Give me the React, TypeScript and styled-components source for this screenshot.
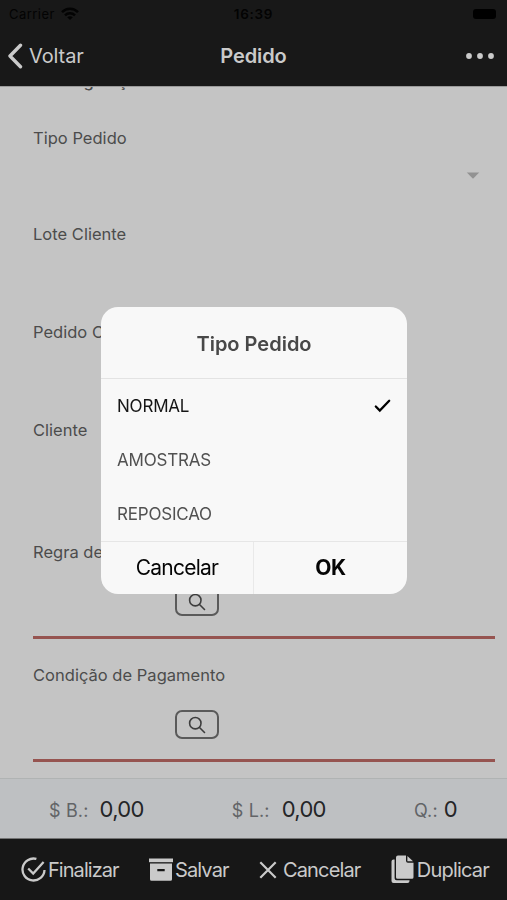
import React from "react";
import styled, { createGlobalStyle } from "styled-components";

const GlobalStyle = createGlobalStyle`
  * { box-sizing: border-box; }
  body { margin: 0; background: #c4c4c4; }
  button { font: inherit; color: inherit; background: none; border: 0; padding: 0; letter-spacing: inherit; }
  svg { display: block; flex: none; }
`;

const Screen = styled.div`
  width: 507px;
  height: 900px;
  display: flex;
  flex-direction: column;
  overflow: hidden;
  background: #c4c4c4;
  font-family: Inter, "Liberation Sans", sans-serif;
  color: #4c4c4c;
`;

const StatusBar = styled.div`
  height: 27px;
  flex: none;
  display: grid;
  grid-template-columns: 1fr auto 1fr;
  align-items: center;
  padding: 0 11px 0 9px;
  background: #181818;
  color: #030303;
  font-size: 13px;
`;

const Carrier = styled.div`
  display: flex;
  align-items: center;
  gap: 6px;
  letter-spacing: 0.45px;
`;

const Clock = styled.div`
  margin-left: 2px;
  font-weight: 600;
  font-size: 13.5px;
  letter-spacing: 0.7px;
`;

const Battery = styled.div`
  justify-self: end;
  width: 23px;
  height: 10px;
  border-radius: 3px;
  background: #000;
`;

const NavBar = styled.header`
  height: 59px;
  flex: none;
  display: grid;
  grid-template-columns: 1fr auto 1fr;
  align-items: center;
  padding: 0 13px 2px 8px;
  background: #181818;
  color: #cacaca;
`;

const BackButton = styled.button`
  display: flex;
  align-items: center;
  gap: 6px;
  font-size: 20px;
  letter-spacing: -0.1px;
`;

const NavTitle = styled.h1`
  margin: 0 0 0 5px;
  font-size: 20px;
  font-weight: 600;
  letter-spacing: -0.1px;
`;

const MoreButton = styled.button`
  justify-self: end;
`;

const Form = styled.main`
  flex: 1;
  min-height: 0;
  overflow: hidden;
  padding: 0 12px 0 33px;
  border-top: 1px solid #9b9b9b;
`;

const SectionTitle = styled.h2`
  height: 22px;
  margin: -17px 0 36px 10px;
  font-size: 16.5px;
  line-height: 22px;
  font-weight: 500;
  letter-spacing: -0.4px;
`;

const Field = styled.div<{ $height: number }>`
  height: ${(p) => p.$height}px;
`;

const Label = styled.div`
  height: 20px;
  font-size: 16.5px;
  line-height: 20px;
  letter-spacing: 0.02px;
  white-space: nowrap;
`;

const SelectRow = styled.div`
  display: flex;
  justify-content: flex-end;
  padding: 24px 15px 0 0;
`;

const LookupRow = styled.div`
  height: 77px;
  padding: 25px 0 0 142px;
  border-bottom: 3px solid #965450;
`;

const LookupButton = styled.button`
  width: 44px;
  height: 29px;
  display: flex;
  align-items: center;
  justify-content: center;
  border: 2px solid #5a5a5a;
  border-radius: 7px;
`;

const Totals = styled.section`
  height: 60px;
  flex: none;
  display: flex;
  align-items: center;
  justify-content: space-between;
  padding: 0 50px 0 49px;
  background: #bec0c2;
  border-top: 1px solid #b0b3b3;
`;

const Total = styled.div<{ $gap: number }>`
  display: flex;
  align-items: baseline;
  gap: ${(p) => p.$gap}px;
  font-size: 18px;
  letter-spacing: 0.15px;
  color: #626467;
`;

const Amount = styled.span`
  font-size: 22px;
  letter-spacing: -0.7px;
  color: #242527;
`;

const Toolbar = styled.footer`
  height: 62px;
  flex: none;
  display: flex;
  align-items: center;
  justify-content: space-between;
  padding: 0 18px 0 21px;
  background: #171717;
  border-top: 1px solid #737373;
  color: #cacaca;
`;

const ToolButton = styled.button<{ $gap: number; $tracking: number }>`
  display: flex;
  align-items: center;
  gap: ${(p) => p.$gap}px;
  font-size: 20px;
  letter-spacing: ${(p) => p.$tracking}px;
`;

const Overlay = styled.div`
  position: fixed;
  top: 307px;
  left: 101px;
  width: 306px;
`;

const Dialog = styled.div`
  height: 287px;
  display: flex;
  flex-direction: column;
  border-radius: 17px;
  background: #f8f8f8;
  overflow: hidden;
`;

const DialogTitle = styled.h2`
  height: 72px;
  margin: 0;
  display: flex;
  align-items: center;
  justify-content: center;
  padding-top: 2px;
  border-bottom: 1px solid #e3e3e3;
  font-size: 20px;
  font-weight: 600;
  color: #484848;
`;

const Options = styled.div`
  height: 162px;
  display: grid;
  grid-template-rows: repeat(3, 54px);
`;

const Option = styled.div<{ $selected?: boolean }>`
  display: flex;
  align-items: center;
  justify-content: space-between;
  padding: 0 16px;
  font-size: 17px;
  letter-spacing: -0.2px;
  color: ${(p) => (p.$selected ? "#151515" : "#515151")};
`;

const Actions = styled.div`
  height: 53px;
  display: grid;
  grid-template-columns: 152px 1fr;
  border-top: 1px solid #e6e6e6;
  color: #050505;
`;

const Action = styled.button<{ $strong?: boolean }>`
  padding-bottom: 2px;
  font-size: 21px;
  font-weight: ${(p) => (p.$strong ? 700 : 400)};
  letter-spacing: ${(p) => (p.$strong ? -0.5 : -0.75)}px;
  & + & { border-left: 1px solid #e9e9e9; }
`;

const SearchIcon = () => (
  <svg width="18" height="18" viewBox="0 0 18 18" fill="none" stroke="#3d3d3d" strokeWidth="1.6" strokeLinecap="round">
    <circle cx="7.3" cy="7.2" r="5.7" />
    <path d="M11.5 11.5 16.5 16.5" />
  </svg>
);

const Lookup = ({ label, height }: { label: string; height: number }) => (
  <Field $height={height}>
    <Label>{label}</Label>
    <LookupRow>
      <LookupButton aria-label={label}>
        <SearchIcon />
      </LookupButton>
    </LookupRow>
  </Field>
);

export default function App() {
  return (
    <Screen>
      <GlobalStyle />
      <StatusBar>
        <Carrier>
          Carrier
          <svg width="18" height="14" viewBox="0 0 18 14" fill="none" stroke="#030303" strokeWidth="2.5">
            <path d="M1 5.2C5.5.6 12.5.6 17 5.2M4 8.3c2.8-2.7 7.2-2.7 10 0" />
            <path d="M9 13 6.2 10.2c1.6-1.4 4-1.4 5.6 0Z" fill="#030303" stroke="none" />
          </svg>
        </Carrier>
        <Clock>16:39</Clock>
        <Battery />
      </StatusBar>
      <NavBar>
        <BackButton>
          <svg width="15" height="26" viewBox="0 0 15 26" fill="none" stroke="currentColor" strokeWidth="3.4" strokeLinecap="round" strokeLinejoin="round">
            <path d="M12.5 2.2 2 13 12.5 23.8" />
          </svg>
          Voltar
        </BackButton>
        <NavTitle>Pedido</NavTitle>
        <MoreButton aria-label="Mais">
          <svg width="28" height="8" viewBox="0 0 28 8" fill="currentColor">
            <circle cx="3" cy="4" r="2.9" />
            <circle cx="14" cy="4" r="2.9" />
            <circle cx="25" cy="4" r="2.9" />
          </svg>
        </MoreButton>
      </NavBar>
      <Form>
        <SectionTitle>Configurações</SectionTitle>
        <Field $height={96}>
          <Label>Tipo Pedido</Label>
          <SelectRow>
            <svg width="14" height="7" viewBox="0 0 14 7" fill="#929292">
              <path d="M.8.5h12.4L7 6.7Z" />
            </svg>
          </SelectRow>
        </Field>
        <Field $height={98}>
          <Label>Lote Cliente</Label>
        </Field>
        <Field $height={98}>
          <Label>Pedido Cliente</Label>
        </Field>
        <Field $height={122}>
          <Label>Cliente</Label>
        </Field>
        <Lookup label="Regra de Preço" height={123} />
        <Lookup label="Condição de Pagamento" height={113} />
      </Form>
      <Totals>
        <Total $gap={11}>$ B.: <Amount>0,00</Amount></Total>
        <Total $gap={12}>$ L.: <Amount>0,00</Amount></Total>
        <Total $gap={6}>Q.: <Amount>0</Amount></Total>
      </Totals>
      <Toolbar>
        <ToolButton $gap={2} $tracking={-0.95}>
          <svg width="25" height="25" viewBox="0 0 25 25" fill="none" stroke="currentColor" strokeWidth="2.3">
            <path d="M15.4 1.9A11 11 0 1 0 23.5 13" />
            <path d="m7.2 11.5 5 5L22.6 5" />
          </svg>
          Finalizar
        </ToolButton>
        <ToolButton $gap={2} $tracking={-0.85}>
          <svg width="24" height="23" viewBox="0 0 24 23" fill="currentColor">
            <path d="M0 .5h24v3.7H0Z" />
            <path fillRule="evenodd" d="M1 5.5h22v15.8a1.5 1.5 0 0 1-1.5 1.5h-19A1.5 1.5 0 0 1 1 21.3ZM8.3 11v2.3h7.4V11Z" />
          </svg>
          Salvar
        </ToolButton>
        <ToolButton $gap={6} $tracking={-0.85}>
          <svg width="18" height="18" viewBox="0 0 18 18" fill="none" stroke="currentColor" strokeWidth="2.2">
            <path d="m1.3 1.3 15.4 15.4M16.7 1.3 1.3 16.7" />
          </svg>
          Cancelar
        </ToolButton>
        <ToolButton $gap={3} $tracking={-0.8}>
          <svg width="23" height="29" viewBox="0 0 23 29" fill="currentColor">
            <path d="M2.5 4.5H3.6V23.3a2 2 0 0 0 2 2h12.9V26a2 2 0 0 1-2 2H2.5A2 2 0 0 1 .5 26V6.5a2 2 0 0 1 2-2Z" />
            <path d="M7 .5h8v5.3a2 2 0 0 0 2 2h5.5v14.5a1.5 1.5 0 0 1-1.5 1.5H6.5A1.5 1.5 0 0 1 5 22.3V2.5a2 2 0 0 1 2-2Z" />
            <path d="M16.4.9 22 6.3h-5.6Z" />
          </svg>
          Duplicar
        </ToolButton>
      </Toolbar>
      <Overlay>
        <Dialog role="dialog">
          <DialogTitle>Tipo Pedido</DialogTitle>
          <Options>
            <Option $selected>
              NORMAL
              <svg width="17" height="14" viewBox="0 0 17 14" fill="none" stroke="#000" strokeWidth="2.3" strokeLinecap="round">
                <path d="m1.8 7.5 4 4L15.2 1.8" />
              </svg>
            </Option>
            <Option>AMOSTRAS</Option>
            <Option>REPOSICAO</Option>
          </Options>
          <Actions>
            <Action>Cancelar</Action>
            <Action $strong>OK</Action>
          </Actions>
        </Dialog>
      </Overlay>
    </Screen>
  );
}
